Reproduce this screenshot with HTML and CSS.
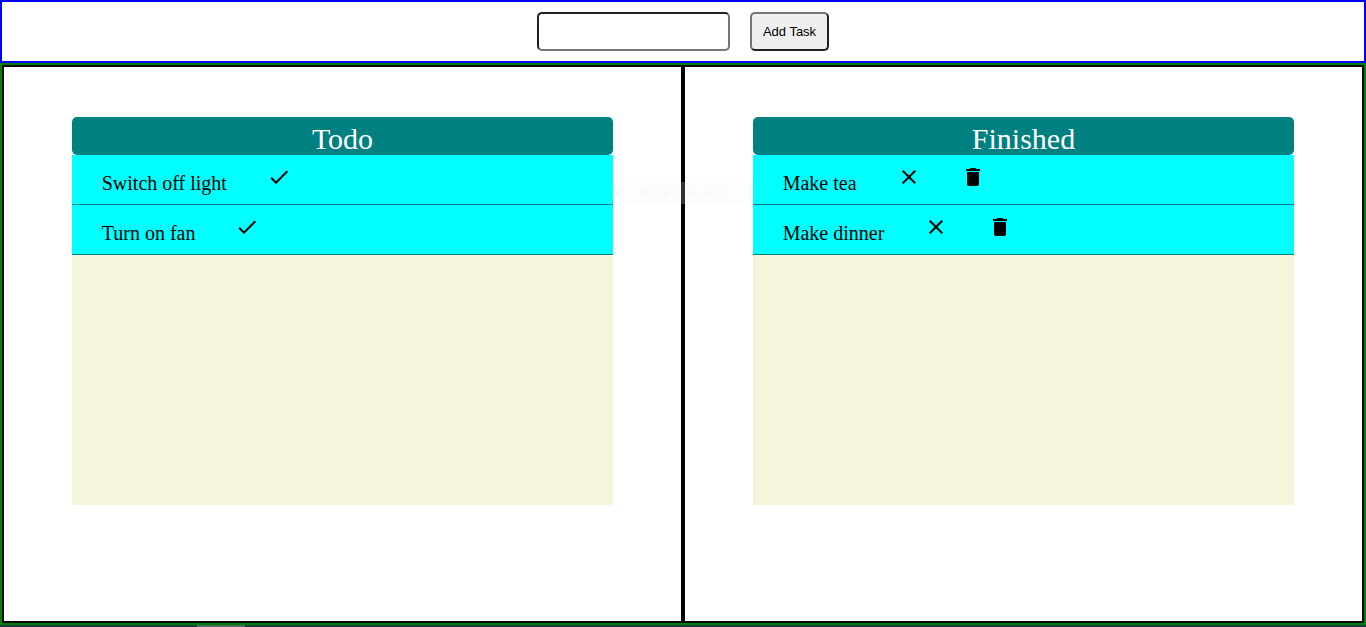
FILE: index.html
```html
<!DOCTYPE html>
<html lang="en">
<head>
<meta charset="utf-8">
<title>Todo</title>
<link rel="stylesheet" href="styles.css">
</head>
<body>
<form class="add-bar">
  <input class="task-input" type="text" aria-label="New task">
  <button class="add-button" type="button">Add Task</button>
</form>
<main class="board">
  <section class="panel">
    <h2 class="title">Todo</h2>
    <ul class="list">
      <li class="task"><span class="name">Switch off light</span>
        <button class="icon" type="button" aria-label="Finish"><svg viewBox="0 0 24 24"><path d="M9 16.17 4.83 12l-1.42 1.41L9 19 21 7l-1.41-1.41z"/></svg></button></li>
      <li class="task"><span class="name">Turn on fan</span>
        <button class="icon" type="button" aria-label="Finish"><svg viewBox="0 0 24 24"><path d="M9 16.17 4.83 12l-1.42 1.41L9 19 21 7l-1.41-1.41z"/></svg></button></li>
    </ul>
  </section>
  <section class="panel">
    <h2 class="title">Finished</h2>
    <ul class="list">
      <li class="task"><span class="name">Make tea</span>
        <button class="icon" type="button" aria-label="Undo"><svg viewBox="0 0 24 24"><path d="M19 6.41 17.59 5 12 10.59 6.41 5 5 6.41 10.59 12 5 17.59 6.41 19 12 13.41 17.59 19 19 17.59 13.41 12z"/></svg></button>
        <button class="icon" type="button" aria-label="Delete"><svg viewBox="0 0 24 24"><path d="M6 19c0 1.1.9 2 2 2h8c1.1 0 2-.9 2-2V7H6v12zM19 4h-3.500l-1-1h-5l-1 1H5v2h14V4z"/></svg></button></li>
      <li class="task"><span class="name">Make dinner</span>
        <button class="icon" type="button" aria-label="Undo"><svg viewBox="0 0 24 24"><path d="M19 6.41 17.59 5 12 10.59 6.41 5 5 6.41 10.59 12 5 17.59 6.41 19 12 13.41 17.59 19 19 17.59 13.41 12z"/></svg></button>
        <button class="icon" type="button" aria-label="Delete"><svg viewBox="0 0 24 24"><path d="M6 19c0 1.1.9 2 2 2h8c1.1 0 2-.9 2-2V7H6v12zM19 4h-3.500l-1-1h-5l-1 1H5v2h14V4z"/></svg></button></li>
    </ul>
  </section>
  <div class="snip-menu"><span class="snip-dot"></span><span>Rectangular Snip</span></div>
</main>
<footer class="taskbar"><div class="taskbar-active"></div></footer>
</body>
</html>
```
FILE: styles.css
```css
* { box-sizing: border-box; }
body {
  margin: 0;
  min-height: 100vh;
  display: flex;
  flex-direction: column;
  background: #fff;
  color: #000;
  font-family: "Liberation Serif", "Times New Roman", serif;
}
.add-bar {
  display: flex;
  justify-content: center;
  gap: 20px;
  padding: 10px;
  border: 2px solid #00f;
}
.task-input, .add-button {
  padding: 10px;
  border: 2px solid;
  border-radius: 5px;
  font: 13px/15px "Liberation Sans", Arial, sans-serif;
}
.task-input {
  width: 193px;
  background: #fff;
  border-color: #212121 #767676 #767676 #212121;
}
.add-button {
  min-width: 79px;
  padding: 10px 8px;
  background: #efefef;
  color: #000;
  border-color: #767676 #212121 #212121 #767676;
}
.board {
  position: relative;
  flex: 1;
  display: flex;
  border: 2px solid #008000;
}
.panel {
  flex: 1;
  display: flex;
  flex-direction: column;
  align-items: center;
  padding: 50px 0;
  border: 2px solid #000;
}
.title {
  width: 80%;
  margin: 0;
  padding-top: 6px;
  background: #008080;
  color: #fff;
  border-radius: 5px;
  font-size: 30px;
  line-height: 32px;
  font-weight: 400;
  text-align: center;
}
.list {
  width: 80%;
  min-height: 350px;
  margin: 0;
  padding: 0;
  list-style: none;
  background: #f5f5dc;
}
.task {
  display: flex;
  align-items: flex-start;
  gap: 40px;
  height: 50px;
  padding: 10px 30px;
  background: #0ff;
  border-bottom: 1px solid #008080;
}
.name {
  font-size: 20px;
  line-height: 36px;
}
.icon {
  padding: 0;
  border: 0;
  background: none;
}
.icon svg {
  display: block;
  width: 24px;
  height: 24px;
}
.snip-menu {
  position: absolute;
  top: 117px;
  left: 611px;
  display: flex;
  align-items: center;
  gap: 18px;
  width: 140px;
  height: 22px;
  padding-left: 2px;
  background: rgba(235, 243, 255, 0.2);
  color: rgba(90, 90, 90, 0.06);
  font: 12px/22px "Noto Sans", "Open Sans", sans-serif;
  font-size: 11px;
  white-space: nowrap;
  pointer-events: none;
}
.snip-dot {
  width: 6px;
  height: 6px;
  border-radius: 50%;
  background: rgba(90, 90, 90, 0.04);
}
.taskbar {
  height: 2px;
  padding-left: 197px;
  background: #1c3b4a;
}
.taskbar-active {
  width: 48px;
  height: 2px;
  background: #50686f;
}
```
